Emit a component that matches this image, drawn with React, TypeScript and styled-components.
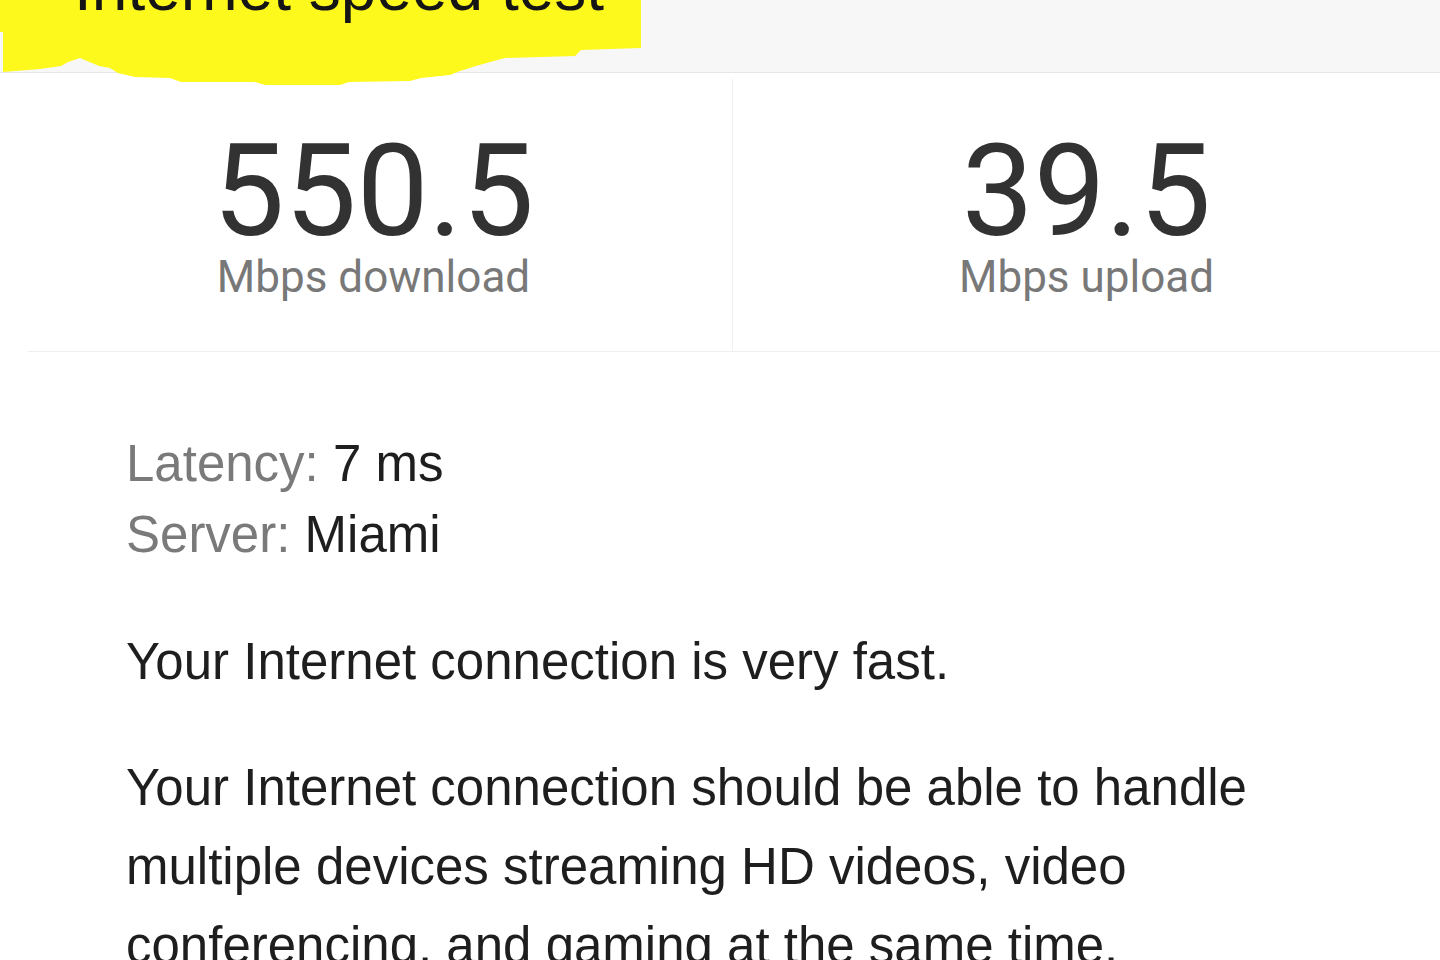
import React from "react";
import styled, { createGlobalStyle } from "styled-components";

const GlobalStyle = createGlobalStyle`
  html, body {
    margin: 0;
    padding: 0;
    background: #ffffff;
  }
  body {
    font-family: "Liberation Sans", Arial, sans-serif;
    overflow: hidden;
  }
`;

const Page = styled.div`
  width: 1440px;
  height: 960px;
  overflow: hidden;
  background: #ffffff;
`;

const Header = styled.header`
  height: 72px;
  background: #f7f7f7;
  border-bottom: 1px solid #e6e6e6;
  display: flex;
  align-items: flex-start;
`;

const Highlight = styled.div`
  position: relative;
  z-index: 1;
  box-sizing: border-box;
  width: 641px;
  height: 86px;
  flex: none;
  padding: 0 36px 0 74px;
  background: #fdf91c;
  clip-path: polygon(
    0px 0px, 641px 0px, 641px 48px, 581px 50px, 575px 56px, 505px 58px,
    490px 62px, 476px 66px, 460px 71px, 450px 75px, 421px 78px, 410px 81px,
    349px 82px, 340px 85px, 265px 85px, 255px 82px, 181px 82px, 170px 78px,
    135px 77px, 118px 73px, 110px 68px, 99px 66px, 80px 58px, 68px 62px,
    61px 66px, 40px 69px, 3px 72px, 3px 32px, 0px 32px
  );
`;

const Title = styled.h1`
  margin: -44px 0 0;
  font-family: "Liberation Sans", Arial, sans-serif;
  font-size: 64px;
  line-height: 64px;
  font-weight: 400;
  color: #151515;
  white-space: nowrap;
`;

const Stats = styled.section`
  margin-left: 28px;
  display: grid;
  grid-template-columns: 705px 1fr;
  border-bottom: 1px solid #efefef;
`;

const StatCell = styled.div<{ $shift: number; $divider?: boolean }>`
  display: flex;
  flex-direction: column;
  align-items: center;
  padding: 54px ${(p) => p.$shift}px 52px 0;
  border-right: ${(p) => (p.$divider ? "1px solid #f1f1f1" : "none")};
  margin-top: ${(p) => (p.$divider ? "6px" : "0")};
  padding-top: ${(p) => (p.$divider ? "48px" : "54px")};
`;

const StatValue = styled.div`
  font-family: Roboto, "Liberation Sans", sans-serif;
  font-size: 128px;
  line-height: 128px;
  color: #323232;
`;

const StatLabel = styled.div`
  font-family: Roboto, "Liberation Sans", sans-serif;
  font-size: 44px;
  line-height: 44px;
  color: #787878;
`;

const Details = styled.section`
  padding: 0 100px 0 126px;
  margin-top: 76px;
  max-width: 1214px;
`;

const InfoList = styled.div`
  font-size: 51px;
  line-height: 71px;
`;

const InfoLine = styled.div`
  white-space: nowrap;
`;

const InfoKey = styled.span`
  color: #7a7a7a;
`;

const InfoValue = styled.span`
  color: #1e1e1e;
`;

const Paragraph = styled.p<{ $gap: number }>`
  margin: ${(p) => p.$gap}px 0 0;
  font-size: 51px;
  line-height: 79px;
  color: #1e1e1e;
`;

export default function App() {
  return (
    <Page>
      <GlobalStyle />
      <Header>
        <Highlight>
          <Title>Internet speed test</Title>
        </Highlight>
      </Header>
      <Stats>
        <StatCell $shift={13} $divider>
          <StatValue>550.5</StatValue>
          <StatLabel>Mbps download</StatLabel>
        </StatCell>
        <StatCell $shift={0}>
          <StatValue>39.5</StatValue>
          <StatLabel>Mbps upload</StatLabel>
        </StatCell>
      </Stats>
      <Details>
        <InfoList>
          <InfoLine>
            <InfoKey>Latency: </InfoKey>
            <InfoValue>7 ms</InfoValue>
          </InfoLine>
          <InfoLine>
            <InfoKey>Server: </InfoKey>
            <InfoValue>Miami</InfoValue>
          </InfoLine>
        </InfoList>
        <Paragraph $gap={52}>Your Internet connection is very fast.</Paragraph>
        <Paragraph $gap={47}>
          Your Internet connection should be able to handle multiple devices
          streaming HD videos, video conferencing, and gaming at the same time.
        </Paragraph>
      </Details>
    </Page>
  );
}
